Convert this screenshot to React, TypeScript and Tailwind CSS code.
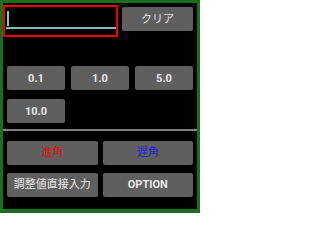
const font = "font-['Roboto','Noto_Sans_CJK_JP',sans-serif]";

function Btn({
  label,
  className = "",
  color = "text-[#e8e8e8]",
}: {
  label: string;
  className?: string;
  color?: string;
}) {
  return (
    <button
      className={`flex h-[24px] items-center justify-center rounded-[2px] bg-[#5f5f5f] text-[11px] leading-none ${color} ${className}`}
    >
      {label}
    </button>
  );
}

export default function App() {
  return (
    <div
      className={`flex h-[213px] w-[200px] flex-col border-x-[3px] border-t-[3px] border-b-[4px] border-[#1b6e1b] bg-black ${font}`}
    >
      <div className="flex items-start">
        <div className="mt-[2px] flex h-[32px] w-[115px] flex-col border-2 border-[#ee0000] px-[1px]">
          <div className="ml-[1px] mt-[4px] h-[15px] w-[1.5px] bg-[#7fcccc]" />
          <div className="mt-[1px] h-[1.5px] w-[110px] bg-[#7fbdbd]" />
        </div>
        <Btn label="クリア" className="ml-[4px] mt-[4px] w-[71px]" />
      </div>

      <div className="mt-[29px] grid grid-cols-3 gap-x-[6px] gap-y-[9px] px-[4px]">
        <Btn label="0.1" className="font-bold" />
        <Btn label="1.0" className="font-bold" />
        <Btn label="5.0" className="font-bold" />
        <Btn label="10.0" className="font-bold" />
      </div>

      <div className="mt-[6px] h-[1.5px] bg-[#7d7d7d]" />

      <div className="mt-[10px] grid grid-cols-2 gap-x-[5px] gap-y-[8px] px-[4px]">
        <Btn label="進角" color="text-[#e01010]" />
        <Btn label="遅角" color="text-[#2020e8]" />
        <Btn label="調整値直接入力" />
        <Btn label="OPTION" className="font-bold" />
      </div>
    </div>
  );
}
